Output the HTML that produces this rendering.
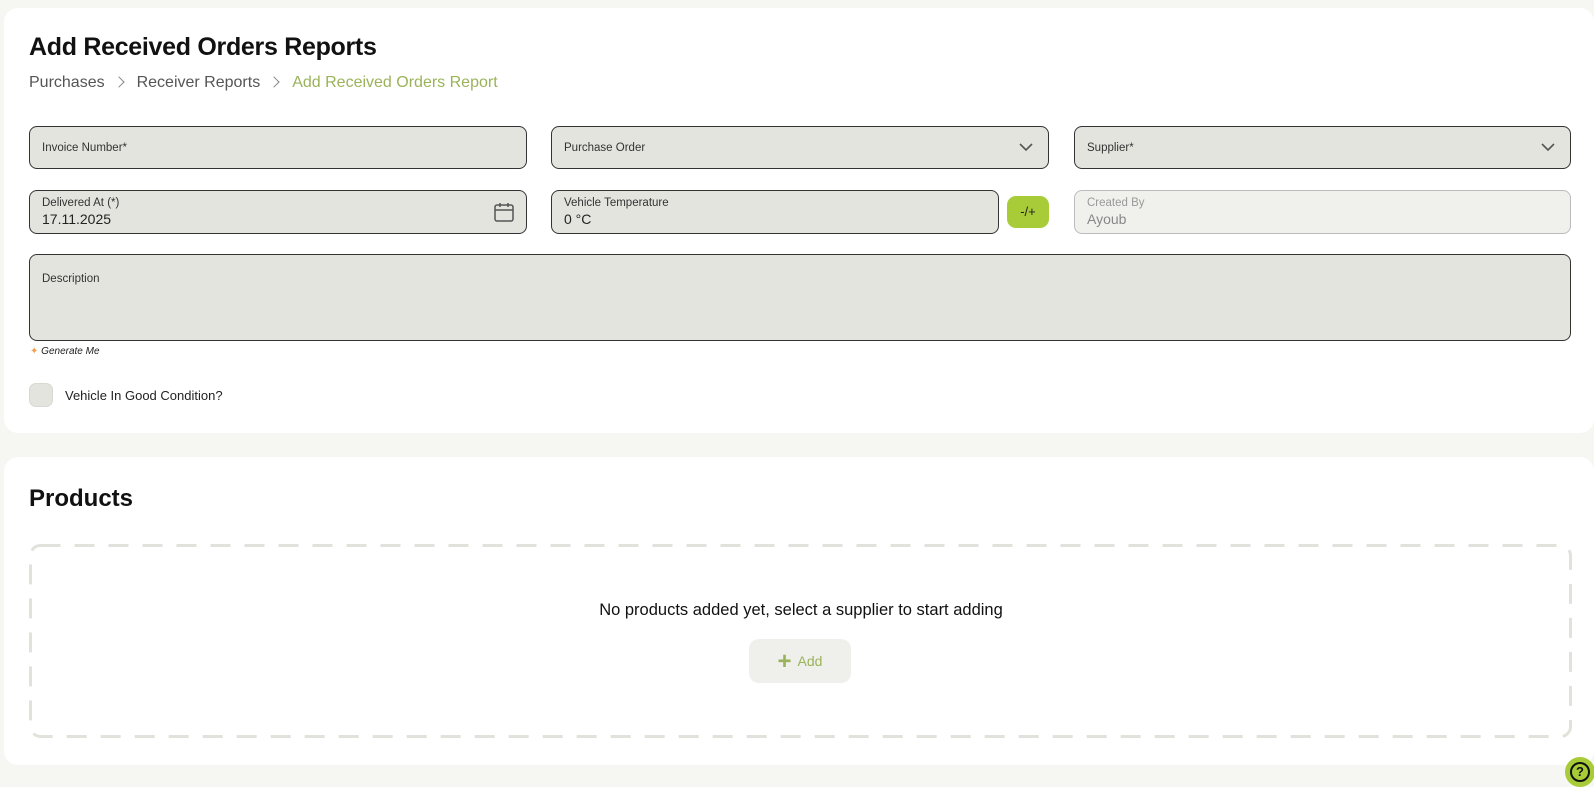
<!DOCTYPE html>
<html><head><meta charset="utf-8"><style>
*{box-sizing:border-box;margin:0;padding:0}
body{width:1594px;height:783px;overflow:hidden;background:#f6f6f2;font-family:"Liberation Sans",sans-serif;color:#111;position:relative}
.card{position:absolute;left:4px;width:1590px;background:#fff;border-radius:14px}
.f{position:absolute;background:#e4e4df;border:1px solid #333;border-radius:8px}
.lbl{position:absolute;left:12px;font-size:11.5px;color:#333}
.val{position:absolute;left:12px;font-size:14px;color:#222}
.chev{position:absolute;right:14px;top:14px}
.sep{display:inline-block;width:8px;height:8px;border-right:1.5px solid #888;border-top:1.5px solid #888;transform:rotate(45deg);margin:0 14px 1px 10px}
</style></head><body>
<div class="card" style="top:8px;height:425px">
  <div style="position:absolute;left:25px;top:25px;font-size:25px;font-weight:bold;letter-spacing:-0.3px">Add Received Orders Reports</div>
  <div style="position:absolute;left:25px;top:66px;font-size:16px;color:#555">Purchases<span class="sep"></span>Receiver Reports<span class="sep"></span><span style="color:#9ab35a">Add Received Orders Report</span></div>
</div>
<div class="f" style="left:29px;top:126px;width:498px;height:43px"><div class="lbl" style="top:15px">Invoice Number*</div></div>
<div class="f" style="left:551px;top:126px;width:498px;height:43px"><div class="lbl" style="top:15px">Purchase Order</div>
<svg class="chev" width="16" height="12" viewBox="0 0 16 12"><path d="M2 3l6 6 6-6" fill="none" stroke="#555" stroke-width="1.6"/></svg></div>
<div class="f" style="left:1074px;top:126px;width:497px;height:43px"><div class="lbl" style="top:15px">Supplier*</div>
<svg class="chev" width="16" height="12" viewBox="0 0 16 12"><path d="M2 3l6 6 6-6" fill="none" stroke="#555" stroke-width="1.6"/></svg></div>
<div class="f" style="left:29px;top:190px;width:498px;height:44px"><div class="lbl" style="top:6px">Delivered At (*)</div><div class="val" style="top:20px;font-size:14px">17.11.2025</div>
<svg style="position:absolute;right:11px;top:10px" width="22" height="22" viewBox="0 0 22 22"><rect x="2" y="4" width="18" height="16" rx="2" fill="none" stroke="#555" stroke-width="1.5"/><path d="M2 9h18M7 2v4M15 2v4" stroke="#555" stroke-width="1.5"/></svg></div>
<div class="f" style="left:551px;top:190px;width:448px;height:44px"><div class="lbl" style="top:6px">Vehicle Temperature</div><div class="val" style="top:20px">0 °C</div></div>
<div style="position:absolute;left:1007px;top:196px;width:42px;height:32px;border-radius:9px;background:#a8cb38;font-size:13px;text-align:center;line-height:32px;color:#222">-/+</div>
<div class="f" style="left:1074px;top:190px;width:497px;height:44px;background:#f0f0ec;border-color:#bbb"><div class="lbl" style="top:6px;color:#999">Created By</div><div class="val" style="top:20px;color:#888">Ayoub</div></div>
<div class="f" style="left:29px;top:254px;width:1542px;height:87px"><div class="lbl" style="top:18px">Description</div></div>
<div style="position:absolute;left:30px;top:346px;font-size:10px;font-style:italic;color:#222"><span style="color:#f0a050;font-style:normal">✦</span> Generate Me</div>
<div style="position:absolute;left:29px;top:383px;width:24px;height:24px;border-radius:7px;background:#e4e4df;border:1px solid #d8d8d2"></div>
<div style="position:absolute;left:65px;top:388px;font-size:13px;color:#222">Vehicle In Good Condition?</div>
<div class="card" style="top:457px;height:308px">
  <div style="position:absolute;left:25px;top:28px;font-size:24px;font-weight:bold">Products</div>
  <svg style="position:absolute;left:25px;top:87px" width="1543" height="194"><rect x="1.5" y="1.5" width="1540" height="191" rx="10" fill="none" stroke="#e2e2dc" stroke-width="3" stroke-dasharray="20 14"/></svg>
  <div style="position:absolute;left:0;width:1594px;top:144px;text-align:center;font-size:16.5px;color:#111">No products added yet, select a supplier to start adding</div>
  <div style="position:absolute;left:745px;top:182px;width:102px;height:44px;border-radius:10px;background:#efefeb;color:#9ab35a;font-size:14px;line-height:44px;text-align:center"><span style="font-size:24px;font-weight:bold;vertical-align:-3px;margin-right:6px">+</span>Add</div>
</div>
<div style="position:absolute;left:1565px;top:757px;width:30px;height:30px;border-radius:50%;background:#a8cb38"></div>
<div style="position:absolute;left:1570px;top:762px;width:20px;height:20px;border-radius:50%;border:2px solid #111;font-size:13px;font-weight:bold;text-align:center;line-height:16px">?</div>
</body></html>
